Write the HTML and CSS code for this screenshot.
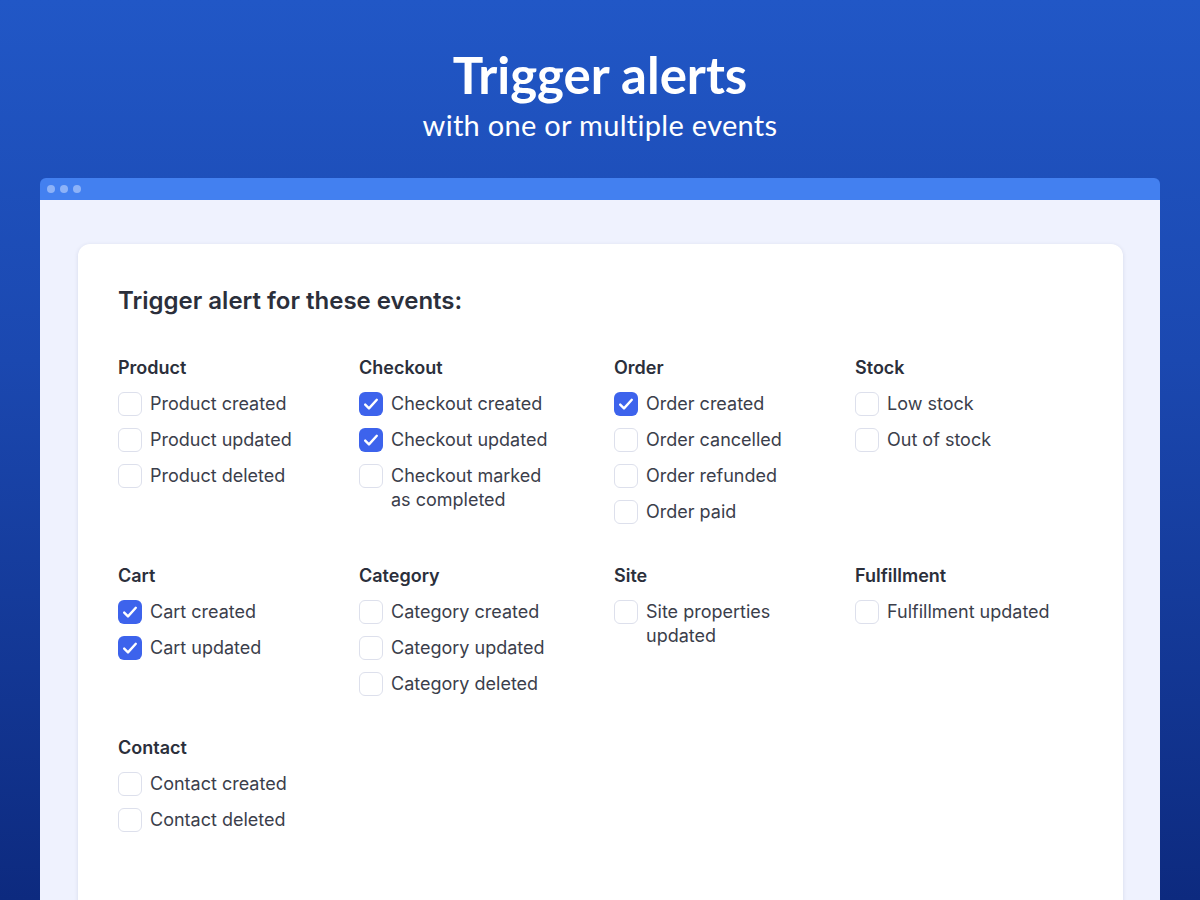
FILE: index.html
```html
<!DOCTYPE html>
<html lang="en">
<head>
    <meta charset="UTF-8">
    <meta name="viewport" content="width=device-width, initial-scale=1.0">
    <title>Trigger alerts</title>
    <link rel="stylesheet" href="styles.css">
</head>
<body>
    <header class="hero">
        <h1>Trigger alerts</h1>
        <p>with one or multiple events</p>
    </header>

    <div class="window">
        <div class="window-bar">
            <span class="dot"></span>
            <span class="dot"></span>
            <span class="dot"></span>
        </div>
        <div class="window-body">
            <div class="card">
                <h2>Trigger alert for these events:</h2>

                <div class="groups">
                    <div class="group">
                        <h3>Product</h3>
                        <label class="item"><span class="box"></span>Product created</label>
                        <label class="item"><span class="box"></span>Product updated</label>
                        <label class="item"><span class="box"></span>Product deleted</label>
                    </div>
                    <div class="group">
                        <h3>Checkout</h3>
                        <label class="item"><span class="box checked"></span>Checkout created</label>
                        <label class="item"><span class="box checked"></span>Checkout updated</label>
                        <label class="item"><span class="box"></span><span>Checkout marked<br>as completed</span></label>
                    </div>
                    <div class="group">
                        <h3>Order</h3>
                        <label class="item"><span class="box checked"></span>Order created</label>
                        <label class="item"><span class="box"></span>Order cancelled</label>
                        <label class="item"><span class="box"></span>Order refunded</label>
                        <label class="item"><span class="box"></span>Order paid</label>
                    </div>
                    <div class="group">
                        <h3>Stock</h3>
                        <label class="item"><span class="box"></span>Low stock</label>
                        <label class="item"><span class="box"></span>Out of stock</label>
                    </div>

                    <div class="group">
                        <h3>Cart</h3>
                        <label class="item"><span class="box checked"></span>Cart created</label>
                        <label class="item"><span class="box checked"></span>Cart updated</label>
                    </div>
                    <div class="group">
                        <h3>Category</h3>
                        <label class="item"><span class="box"></span>Category created</label>
                        <label class="item"><span class="box"></span>Category updated</label>
                        <label class="item"><span class="box"></span>Category deleted</label>
                    </div>
                    <div class="group">
                        <h3>Site</h3>
                        <label class="item"><span class="box"></span><span>Site properties<br>updated</span></label>
                    </div>
                    <div class="group">
                        <h3>Fulfillment</h3>
                        <label class="item"><span class="box"></span>Fulfillment updated</label>
                    </div>

                    <div class="group">
                        <h3>Contact</h3>
                        <label class="item"><span class="box"></span>Contact created</label>
                        <label class="item"><span class="box"></span>Contact deleted</label>
                    </div>
                </div>
            </div>
        </div>
    </div>
</body>
</html>
```

FILE: styles.css
```css
html, body {
    height: 100%;
}
body {
    margin: 0;
    overflow: hidden;
    font-family: "Inter", "Liberation Sans", sans-serif;
    background: linear-gradient(180deg, #2157c6 0%, #1b48b0 40%, #0d2a7f 100%);
}
.hero {
    text-align: center;
    color: #fff;
    padding-top: 46px;
    height: 178px;
    box-sizing: border-box;
}
.hero h1 {
    font-family: "Lato", "Liberation Sans", sans-serif;
    font-weight: 700;
    font-size: 51px;
    line-height: 58px;
    margin: 0;
}
.hero p {
    font-family: "Lato", "Liberation Sans", sans-serif;
    font-size: 29px;
    line-height: 34px;
    letter-spacing: 0.3px;
    margin: 4px 0 0;
}
.window {
    margin: 0 40px;
}
.window-bar {
    height: 22px;
    background-color: #4380f0;
    border-radius: 6px 6px 0 0;
    display: flex;
    align-items: center;
    gap: 5px;
    padding-left: 7px;
}
.dot {
    width: 8px;
    height: 8px;
    border-radius: 50%;
    background-color: #8db2f8;
}
.window-body {
    height: 700px;
    box-sizing: border-box;
    overflow: hidden;
    background-color: #eff2fe;
    padding: 44px 37px 0 38px;
}
.card {
    background-color: #fff;
    border-radius: 12px;
    box-shadow: 0 1px 4px rgba(30, 40, 90, 0.12);
    padding: 42px 40px 0;
    height: 680px;
    box-sizing: border-box;
}
.card h2 {
    margin: 0 0 40px;
    font-size: 24px;
    line-height: 30px;
    font-weight: 600;
    color: #2b2f3b;
}
.groups {
    display: grid;
    grid-template-columns: 241px 255px 241px 1fr;
    row-gap: 40px;
}
.group {
    display: flex;
    flex-direction: column;
    gap: 12px;
}
.group h3 {
    margin: 0;
    font-size: 18px;
    line-height: 24px;
    font-weight: 600;
    color: #2b2f3b;
}
.item {
    display: flex;
    align-items: flex-start;
    gap: 8px;
    font-size: 18px;
    line-height: 24px;
    color: #3b3e4b;
}
.box {
    flex: none;
    width: 24px;
    height: 24px;
    box-sizing: border-box;
    border: 1.5px solid #dde0ec;
    border-radius: 6px;
    background-color: #fff;
}
.box.checked {
    border: none;
    background-color: #3d63ec;
    background-image: url("data:image/svg+xml,%3Csvg xmlns='http://www.w3.org/2000/svg' viewBox='0 0 24 24'%3E%3Cpath d='M6.2 12.6l3.8 3.8 7.8-8.6' fill='none' stroke='white' stroke-width='2.4' stroke-linecap='round' stroke-linejoin='round'/%3E%3C/svg%3E");
}
```
